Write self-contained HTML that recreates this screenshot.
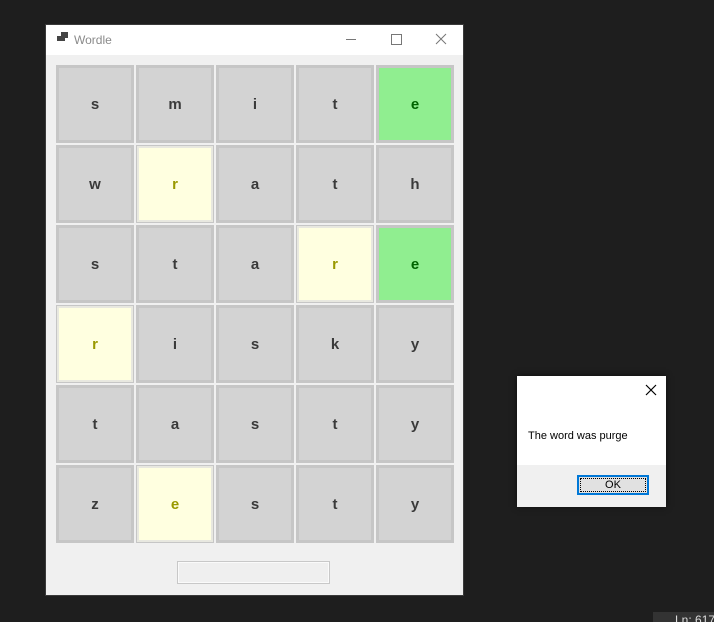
<!DOCTYPE html><html><head><style>
html,body{margin:0;width:714px;height:622px;overflow:hidden}
body{background:#1e1e1e;position:relative;font-family:"Liberation Sans",Arial,sans-serif}
.win{position:absolute;left:45px;top:24px;width:419px;height:572px;background:#f0f0f0;border:1px solid #3a3a3a;box-sizing:border-box}
.tb{position:absolute;left:0;top:0;width:100%;height:30px;background:#fff}
.tt{position:absolute;left:28px;top:8px;font-size:12px;color:#8a8a8a}
.c{position:absolute;width:78px;height:78px;box-sizing:border-box;border:3px solid #c6c6c6;background:#d3d3d3;display:flex;align-items:center;justify-content:center;font-weight:bold;font-size:15px;color:#3a3a3a;padding-top:1px}
.g{background:#90ee90;color:#006400}
.y{background:#ffffe0;color:#999900;border:1px solid #c6c6c6;box-shadow:inset 0 0 0 2px #e8e8e0}
.dlg{position:absolute;left:517px;top:376px;width:149px;height:131px;background:#f0f0f0;box-shadow:0 0 6px rgba(0,0,0,.5)}
</style></head><body>
<div class="win"><div class="tb">
<div style="position:absolute;left:11px;top:11px;width:4px;height:5px;background:#444"></div>
<div style="position:absolute;left:15px;top:7px;width:7px;height:6px;background:#444"></div>
<div style="position:absolute;left:15px;top:13px;width:4px;height:3px;background:#444"></div>
<div class="tt">Wordle</div>
<div style="position:absolute;left:300px;top:14px;width:10px;height:1px;background:#777"></div>
<div style="position:absolute;left:345px;top:9px;width:9px;height:9px;border:1px solid #777"></div>
<svg style="position:absolute;left:389px;top:8px" width="12" height="12"><path d="M1 1L11 11M11 1L1 11" stroke="#777" stroke-width="1"/></svg>
</div>
<div style="position:absolute;left:131px;top:536px;width:153px;height:23px;box-sizing:border-box;border:1px solid #c8c8c8;box-shadow:inset 0 0 0 1px #fafafa;background:#efefef"></div>
</div>
<div id="g"></div>
<script>
var rows=[["s","m","i","t","e"],["w","r","a","t","h"],["s","t","a","r","e"],["r","i","s","k","y"],["t","a","s","t","y"],["z","e","s","t","y"]];
var cls=[["","","","","g"],["","y","","",""],["","","","y","g"],["y","","","",""],["","","","",""],["","y","","",""]];
var h="";for(var r=0;r<6;r++)for(var c=0;c<5;c++)h+='<div class="c '+cls[r][c]+'" style="left:'+(56+80*c)+'px;top:'+(65+80*r)+'px">'+rows[r][c]+'</div>';
document.getElementById("g").innerHTML=h;
</script>
<div class="dlg"><div style="position:absolute;left:0;top:0;width:149px;height:89px;background:#fff"></div>
<svg style="position:absolute;left:128px;top:8px" width="12" height="12"><path d="M1 1L11 11M11 1L1 11" stroke="#000" stroke-width="1.2"/></svg>
<div style="position:absolute;left:11px;top:54px;font-size:11px;color:#000">The word was purge</div>
<div style="position:absolute;left:60px;top:99px;width:72px;height:20px;box-sizing:border-box;border:2px solid #0078d7;background:#e1e1e1;font-size:11px;text-align:center;line-height:17px;outline:1px dotted #000;outline-offset:-4px">OK</div>
</div>
<div style="position:absolute;left:653px;top:612px;width:61px;height:10px;overflow:hidden;background:#333;color:#ddd;font-size:12px;line-height:12px;padding-left:22px;padding-top:2px;box-sizing:border-box;white-space:nowrap">Ln: 617</div>
</body></html>
